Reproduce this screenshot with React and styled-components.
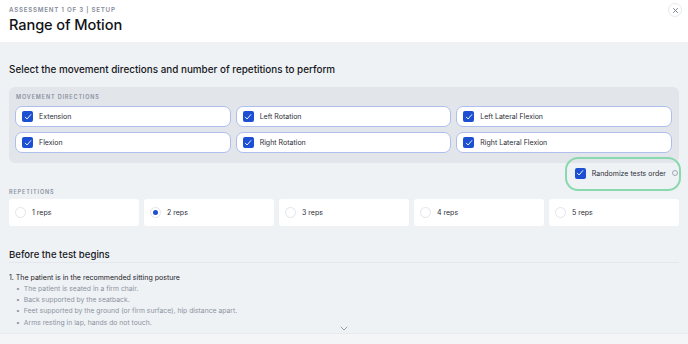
import React from "react";
import styled, { createGlobalStyle } from "styled-components";

const Global = createGlobalStyle`
  html, body { margin: 0; padding: 0; }
  body { font-family: Inter, "Noto Sans", sans-serif; background: #eff2f5; color: #16181d; }
  * { box-sizing: border-box; }
`;

const Page = styled.div`
  width: 688px;
  height: 344px;
  overflow: hidden;
  display: flex;
  flex-direction: column;
`;

const Header = styled.header`
  height: 42px;
  flex: none;
  background: #fff;
  display: flex;
  justify-content: space-between;
  align-items: flex-start;
  padding: 5px 9px 0 9px;
`;

const Eyebrow = styled.div`
  font-size: 6.2px;
  font-weight: 600;
  letter-spacing: 0.75px;
  color: #858c9a;
  line-height: 8px;
  text-transform: uppercase;
  margin-top: 1px;
`;

const Title = styled.h1`
  margin: 2px 0 0;
  font-size: 14.6px;
  font-weight: 500;
  line-height: 18px;
  color: #111318;
  letter-spacing: -0.1px;
`;

const CloseBtn = styled.button`
  margin-top: -2px;
  margin-right: -3px;
  width: 14px;
  height: 14px;
  border-radius: 50%;
  border: 1px solid #e7e9ee;
  background: #fff;
  padding: 0;
  display: flex;
  align-items: center;
  justify-content: center;
`;

const Scroll = styled.main`
  flex: 1;
  overflow: hidden;
  position: relative;
  padding: 20px 9px 0 9px;
`;

const Lead = styled.h2`
  margin: 0;
  font-size: 9.9px;
  font-weight: 500;
  line-height: 14px;
  color: #15171c;
`;

const Panel = styled.section`
  margin-top: 11px;
  background: #e2e5ea;
  border-radius: 6px;
  padding: 6px 7px 10px 6px;
`;

const SectionLabel = styled.div`
  font-size: 5.5px;
  font-weight: 600;
  letter-spacing: 0.85px;
  color: #8a91a0;
  line-height: 8px;
  text-transform: uppercase;
  padding-left: ${(p) => p.$indent || 0}px;
`;

const DirGrid = styled.div`
  margin-top: 5px;
  display: grid;
  grid-template-columns: repeat(3, 1fr);
  gap: 5px;
`;

const DirCard = styled.label`
  height: 21px;
  background: #fff;
  border: 1px solid #aebfee;
  border-radius: 7px;
  display: flex;
  align-items: center;
  padding-left: 6px;
  gap: 6px;
  font-size: 7px;
  color: #2b2e36;
`;

const Box = styled.span`
  width: 11px;
  height: 11px;
  border-radius: 2px;
  background: #1d4fd3;
  display: inline-flex;
  align-items: center;
  justify-content: center;
  flex: none;
`;

const Check = () => (
  <Box>
    <svg width="8" height="8" viewBox="0 0 8 8">
      <path d="M1.3 4.2 L3.1 6 L6.8 1.6" fill="none" stroke="#fff" strokeWidth="0.9" strokeLinecap="round" strokeLinejoin="round" />
    </svg>
  </Box>
);

const RandomRow = styled.div`
  display: flex;
  justify-content: flex-end;
  margin-top: 2px;
  height: 16px;
`;

const Randomize = styled.label`
  position: relative;
  display: flex;
  align-items: center;
  gap: 6px;
  margin-right: 1px;
  font-size: 7px;
  color: #2b2e36;
  &::after {
    content: "";
    position: absolute;
    left: -10px;
    right: -3px;
    top: -8px;
    bottom: -10px;
    border: 2px solid #8ad8ae;
    border-radius: 13px;
  }
`;

const Info = styled.span`
  width: 6px;
  height: 6px;
  border: 0.8px solid #a3a8b3;
  border-radius: 50%;
  margin-left: 0;
`;

const RepLabelWrap = styled.div`
  margin-top: 7px;
`;

const RepGrid = styled.div`
  margin-top: 3px;
  display: grid;
  grid-template-columns: repeat(5, 1fr);
  gap: 5px;
`;

const RepCard = styled.label`
  height: 27px;
  background: #fff;
  border-radius: 3px;
  display: flex;
  align-items: center;
  padding-left: 6px;
  gap: 6px;
  font-size: 7px;
  color: #2b2e36;
`;

const Radio = styled.span`
  width: 11px;
  height: 11px;
  border-radius: 50%;
  border: 1px solid #e2e5ea;
  background: #fff;
  display: inline-flex;
  align-items: center;
  justify-content: center;
  flex: none;
  &::after {
    content: "";
    width: 5px;
    height: 5px;
    border-radius: 50%;
    background: ${(p) => (p.$on ? "#1d4fd3" : "transparent")};
  }
`;

const SubHead = styled.h3`
  margin: 23px 0 0;
  font-size: 9.6px;
  font-weight: 500;
  line-height: 12px;
  color: #15171c;
  padding-bottom: 1px;
  border-bottom: 1px solid #e4e7eb;
`;

const Steps = styled.ol`
  margin: 9px 0 0;
  padding: 0;
  list-style: none;
`;

const Step = styled.li`
  font-size: 7px;
  line-height: 11px;
  color: #1d2027;
  & + & {
    margin-top: 4px;
  }
`;

const Bullets = styled.ul`
  margin: 0;
  padding: 0 0 0 7px;
  list-style: none;
`;

const Bullet = styled.li`
  font-size: 6.8px;
  line-height: 11.2px;
  color: #8d93a0;
  &::before {
    content: "•";
    margin-right: 4px;
  }
`;

const Chevron = styled.div`
  position: absolute;
  left: 340px;
  bottom: 2px;
  display: flex;
`;

const Footer = styled.footer`
  height: 11px;
  flex: none;
  background: #f4f5f7;
  border-top: 1px solid #e8eaee;
`;

const directions = [
  "Extension",
  "Left Rotation",
  "Left Lateral Flexion",
  "Flexion",
  "Right Rotation",
  "Right Lateral Flexion",
];

const reps = [1, 2, 3, 4, 5];

export default function App() {
  return (
    <Page>
      <Global />
      <Header>
        <div>
          <Eyebrow>Assessment 1 of 3 | Setup</Eyebrow>
          <Title>Range of Motion</Title>
        </div>
        <CloseBtn aria-label="Close">
          <svg width="7" height="7" viewBox="0 0 7 7">
            <path d="M1.5 1.5 L5.5 5.5 M5.5 1.5 L1.5 5.5" stroke="#7f8592" strokeWidth="1" strokeLinecap="round" />
          </svg>
        </CloseBtn>
      </Header>
      <Scroll>
        <Lead>Select the movement directions and number of repetitions to perform</Lead>
        <Panel>
          <SectionLabel $indent={1}>Movement directions</SectionLabel>
          <DirGrid>
            {directions.map((d) => (
              <DirCard key={d}>
                <Check />
                {d}
              </DirCard>
            ))}
          </DirGrid>
        </Panel>
        <RandomRow>
          <Randomize>
            <Check />
            Randomize tests order
            <Info />
          </Randomize>
        </RandomRow>
        <RepLabelWrap>
          <SectionLabel>Repetitions</SectionLabel>
        </RepLabelWrap>
        <RepGrid>
          {reps.map((r) => (
            <RepCard key={r}>
              <Radio $on={r === 2} />
              {r} reps
            </RepCard>
          ))}
        </RepGrid>
        <SubHead>Before the test begins</SubHead>
        <Steps>
          <Step>
            1. The patient is in the recommended sitting posture
            <Bullets>
              <Bullet>The patient is seated in a firm chair.</Bullet>
              <Bullet>Back supported by the seatback.</Bullet>
              <Bullet>Feet supported by the ground (or firm surface), hip distance apart.</Bullet>
              <Bullet>Arms resting in lap, hands do not touch.</Bullet>
            </Bullets>
          </Step>
          <Step>2. The head and neck are in a neutral and relaxed position</Step>
        </Steps>
        <Chevron>
          <svg width="8" height="5" viewBox="0 0 8 5">
            <path d="M1 1 L4 4 L7 1" fill="none" stroke="#9aa0ab" strokeWidth="1" strokeLinecap="round" strokeLinejoin="round" />
          </svg>
        </Chevron>
      </Scroll>
      <Footer />
    </Page>
  );
}
